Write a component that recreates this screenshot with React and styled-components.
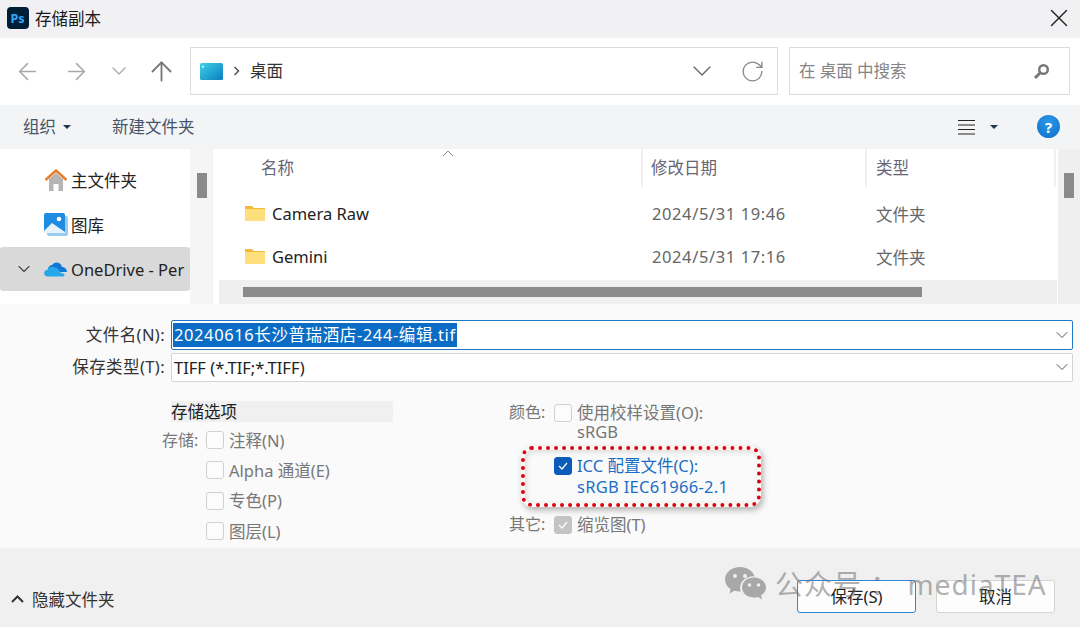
import React from 'react'
import styled, { createGlobalStyle } from 'styled-components'
import { ArrowLeft, ArrowRight, ArrowUp, ChevronDown, RotateCw, X } from 'lucide-react'

const Global = createGlobalStyle`
  html, body { margin: 0; padding: 0; background: #fafafa; }
  body {
    font-family: "Noto Sans", "Noto Sans CJK SC", sans-serif;
    font-size: 16.5px;
    color: #1a1a1a;
  }
`

const Dialog = styled.div`
  position: relative;
  width: 1080px;
  height: 627px;
  overflow: hidden;
  display: flex;
  flex-direction: column;
`
const TitleBar = styled.div`
  height: 38px;
  flex: none;
  box-sizing: border-box;
  background: #f1f1f3;
  display: flex;
  align-items: center;
  padding: 0 6px 3px 7px;
  gap: 6px;
  & > span { flex: 1; }
`
const NavBar = styled.div`
  height: 67px;
  flex: none;
  box-sizing: border-box;
  background: #fff;
  display: flex;
  align-items: center;
  padding: 0 10px 1px 13.5px;
`
const NavIcon = styled.div`
  width: ${p => p.$w}px;
  flex: none;
  display: flex;
  align-items: center;
  color: ${p => p.$color || '#a9a9a9'};
`
const AddressBox = styled.div`
  width: 588px;
  height: 48px;
  box-sizing: border-box;
  flex: none;
  border: 1px solid #dcdcdc;
  display: flex;
  align-items: center;
  padding: 0 12px 0 9px;
  color: #333;
  & > b { font-weight: 400; flex: 1; padding-bottom: 3px; }
`
const SearchBox = styled.div`
  width: 281px;
  height: 48px;
  box-sizing: border-box;
  flex: none;
  margin-left: 11px;
  border: 1px solid #dcdcdc;
  display: flex;
  align-items: center;
  justify-content: space-between;
  padding: 0 19px 0 9px;
  color: #858585;
  & > span { padding-bottom: 3px; }
`
const ToolBar = styled.div`
  height: 44px;
  flex: none;
  box-sizing: border-box;
  background: #f3f4f6;
  display: flex;
  align-items: center;
  padding: 0 20px 1px 23px;
  color: #44546a;
  & > span { padding-bottom: 2px; }
`
const NewFolder = styled.span`
  margin-left: 41px;
  flex: 1;
`
const Caret = styled.i`
  display: inline-block;
  width: 0;
  height: 0;
  border-left: 4px solid transparent;
  border-right: 4px solid transparent;
  border-top: 4px solid #27344e;
  margin-left: ${p => p.$ml || 7}px;
`
const Help = styled.div`
  width: 23px;
  height: 23px;
  border-radius: 50%;
  background: radial-gradient(circle at 50% 30%, #2a97e8, #0f70c8);
  color: #fff;
  font-size: 15px;
  font-weight: 700;
  display: flex;
  align-items: center;
  justify-content: center;
  margin-left: 39px;
`
const Browser = styled.div`
  height: 155px;
  flex: none;
  display: flex;
  background: #fff;
`
const Sidebar = styled.div`
  width: 190px;
  flex: none;
  padding-top: 8px;
  overflow: hidden;
`
const SideRow = styled.div`
  height: ${p => p.$h || 45}px;
  display: flex;
  align-items: center;
  padding-left: ${p => (p.$active ? 14 : 44)}px;
  white-space: nowrap;
  background: ${p => (p.$active ? '#d9d9d9' : 'transparent')};
  border-radius: ${p => (p.$active ? '3px' : 0)};
  color: #222;
  gap: ${p => (p.$active ? 4 : 3)}px;
`
const ScrollTrack = styled.div`
  width: ${p => p.$w}px;
  flex: none;
  margin-left: ${p => p.$ml || 0}px;
  background: ${p => p.$bg};
  display: flex;
  justify-content: center;
  padding-top: 24px;
  box-sizing: border-box;
`
const Thumb = styled.div`
  width: 10px;
  height: 25px;
  background: #8a8a8a;
`
const ListPane = styled.div`
  width: 838px;
  flex: none;
  margin-left: 6px;
  display: flex;
  flex-direction: column;
`
const HeaderRow = styled.div`
  height: 38px;
  margin-bottom: 5px;
  display: grid;
  grid-template-columns: 424px 224px 1fr;
  color: #667;
  position: relative;
`
const HeadCell = styled.div`
  padding-left: ${p => p.$pl}px;
  padding-top: 8px;
  border-right: 2px solid #f0f0f0;
  line-height: 22px;
  margin-right: ${p => p.$mr || 0}px;
`
const SortMark = styled.svg`
  position: absolute;
  left: 223px;
  top: 1px;
`
const FileRow = styled.div`
  height: 43px;
  display: grid;
  grid-template-columns: 424px 224px 1fr;
  align-items: center;
`
const NameCell = styled.div`
  display: flex;
  align-items: center;
  gap: 6px;
  padding-left: 25px;
  color: #222;
`
const DimCell = styled.div`
  padding-left: ${p => p.$pl || 9}px;
  color: #666;
  letter-spacing: ${p => p.$ls || 0}px;
`
const HScroll = styled.div`
  height: 24px;
  margin-top: auto;
  background: #efefef;
  padding: 7px 0 0 24px;
  box-sizing: border-box;
`
const HThumb = styled.div`
  width: 679px;
  height: 10px;
  background: #8a8a8a;
`
const Form = styled.div`
  height: 244px;
  flex: none;
  background: #fafafa;
  padding-top: 15px;
  box-sizing: border-box;
`
const FieldRow = styled.div`
  height: 32px;
  display: flex;
  align-items: center;
`
const FieldLabel = styled.div`
  width: 171px;
  flex: none;
  text-align: right;
  padding-right: 6px;
  padding-bottom: 2px;
  box-sizing: border-box;
  color: #333;
  letter-spacing: .4px;
`
const Combo = styled.div`
  width: 902px;
  height: ${p => (p.$focus ? 30 : 29)}px;
  box-sizing: border-box;
  background: #fff;
  border: 1px solid ${p => (p.$focus ? '#1f78c8' : '#d4d4d4')};
  border-radius: 2px;
  display: flex;
  align-items: center;
  justify-content: space-between;
  padding-left: ${p => (p.$focus ? 1 : 2)}px;
  flex: none;
  color: #222;
`
const Selected = styled.span`
  background: #0a6cc4;
  color: #fff;
  line-height: 24px;
  padding: 0 1px;
  letter-spacing: .6px;
`
const Options = styled.div`
  display: grid;
  grid-template-columns: 347px 1fr;
  padding-left: 162px;
  margin-top: 18px;
`
const OptHead = styled.div`
  margin-left: 9px;
  width: 222px;
  height: 21px;
  background: #f0f0f0;
  line-height: 21px;
  color: #222;
  margin-bottom: 3px;
`
const RightOptions = styled.div`
  padding-top: 1px;
`
const OptRow = styled.div`
  display: flex;
  align-items: ${p => (p.$top ? 'flex-start' : 'center')};
  height: ${p => p.$h || 30.3}px;
  color: ${p => p.$color || '#777'};
  line-height: 21px;
  letter-spacing: ${p => p.$ls || 0}px;
`
const OptLabel = styled.div`
  width: ${p => p.$w}px;
  flex: none;
  color: #777;
  font-size: 16px;
`
const Box = styled.div`
  width: 18px;
  height: 18px;
  flex: none;
  box-sizing: border-box;
  border-radius: 3px;
  border: 1px solid ${p => (p.$on ? '#0b5cb8' : p.$off ? '#c4c4c4' : '#d0d0d0')};
  background: ${p => (p.$on ? '#0b5cb8' : p.$off ? '#c4c4c4' : '#fcfcfc')};
  margin-right: 5px;
  margin-top: ${p => p.$mt || 0}px;
  display: flex;
  align-items: center;
  justify-content: center;
`
const Footer = styled.div`
  flex: 1;
  background: #f0f0f0;
  display: flex;
  align-items: center;
  padding: 18px 25px 0 11px;
  box-sizing: border-box;
  color: #333;
`
const HideToggle = styled.div`
  flex: 1;
  display: flex;
  align-items: center;
  gap: 8px;
  padding-top: 5px;
`
const Btn = styled.div`
  width: 119px;
  height: 33px;
  box-sizing: border-box;
  background: #fdfdfd;
  border: 1px solid ${p => (p.$primary ? '#2f86d6' : '#d4d4d4')};
  border-radius: 3px;
  display: flex;
  align-items: center;
  justify-content: center;
  padding-bottom: 2px;
  margin-left: ${p => p.$ml || 0}px;
  color: #222;
`
const Callout = styled.div`
  position: absolute;
  left: 521px;
  top: 446px;
  width: 240px;
  height: 61px;
  box-sizing: border-box;
  border: 4px dotted #e00010;
  border-radius: 11px;
  box-shadow: 2px 3px 6px rgba(0,0,0,.3), inset 2px 2px 5px rgba(0,0,0,.12);
  pointer-events: none;
`
const Watermark = styled.div`
  position: absolute;
  left: 725px;
  top: 565px;
  display: flex;
  align-items: center;
  gap: 9px;
  color: rgba(110,110,110,.55);
  font-size: 28px;
  letter-spacing: 1px;
  white-space: nowrap;
  line-height: 38px;
  pointer-events: none;
`

const Folder = () => (
  <svg width="22" height="17" viewBox="0 0 22 17">
    <path d="M1 1h7l2 2h11v13H1z" fill="#f5b93a" />
    <rect x="1" y="4" width="20" height="12" fill="#fedf7e" />
  </svg>
)

const Check = () => (
  <svg width="10" height="8" viewBox="0 0 10 8">
    <path d="M1 4l3 3 5-6" fill="none" stroke="#fff" strokeWidth="1.200" />
  </svg>
)

const Wechat = () => (
  <svg width="41" height="34" viewBox="0 0 41 34" fill="#a8a8a8">
    <path d="M15 0C7 0 0 5.400 0 12.500c0 4 2.200 7.300 5.500 9.600L4.500 26.500l5-2.700c1.700.5 3.300.8 5 .8h1.300c-.5-1.300-.7-2.600-.7-3.800 0-6.500 6-11.500 13.400-11.500h1C28 4 22 0 15 0z" />
    <path d="M41 20.500C41 14.600 35.300 10.500 29 10.500s-12 4.100-12 10 5.700 10 12 10c1.300 0 2.700-.2 4-.6l4 2.600-1-4c3-2 5-4.800 5-8z" />
    <g fill="#f0f0f0">
      <circle cx="10" cy="9" r="2" /><circle cx="20" cy="9" r="2" />
      <circle cx="24.500" cy="18" r="1.700" /><circle cx="33.500" cy="18" r="1.700" />
    </g>
  </svg>
)

export default function App() {
  return (
    <Dialog>
      <Global />
      <TitleBar>
        <svg width="22" height="22" viewBox="0 0 22 22">
          <rect width="22" height="22" rx="4" fill="#001e36" />
          <text x="3.500" y="15.500" fontSize="12.500" fontWeight="700" fill="#31a8ff" fontFamily="Noto Sans">Ps</text>
        </svg>
        <span>存储副本</span>
        <X size={30} strokeWidth={1.1} color="#222" />
      </TitleBar>

      <NavBar>
        <NavIcon $w={49}><ArrowLeft size={27} strokeWidth={1.4} /></NavIcon>
        <NavIcon $w={44}><ArrowRight size={27} strokeWidth={1.4} /></NavIcon>
        <NavIcon $w={39}><ChevronDown size={24} strokeWidth={1.3} /></NavIcon>
        <NavIcon $w={44.500} $color="#757575"><ArrowUp size={31} strokeWidth={1.4} /></NavIcon>
        <AddressBox>
          <svg width="23" height="17" viewBox="0 0 23 17" style={{ marginRight: 10 }}>
            <defs>
              <linearGradient id="desk" x1="0" y1="0" x2="1" y2="1">
                <stop offset="0" stopColor="#3fd0ea" />
                <stop offset="1" stopColor="#0b7fc0" />
              </linearGradient>
            </defs>
            <rect width="23" height="17" rx="1.500" fill="url(#desk)" />
            <rect x="2" y="3" width="2" height="1.500" fill="#dff" />
          </svg>
          <svg width="7" height="10" viewBox="0 0 7 10" style={{ marginRight: 10 }}>
            <path d="M1.500 1l4 4-4 4" fill="none" stroke="#555" strokeWidth="1.500" />
          </svg>
          <b>桌面</b>
          <ChevronDown size={32} strokeWidth={1} color="#666" style={{ marginRight: 22 }} />
          <RotateCw size={25} strokeWidth={1.3} color="#888" />
        </AddressBox>
        <SearchBox>
          <span>在 桌面 中搜索</span>
          <svg width="17" height="17" viewBox="0 0 17 17">
            <circle cx="10.500" cy="6.500" r="4.300" fill="none" stroke="#777" strokeWidth="2.400" />
            <path d="M7.500 9.500L2 15" stroke="#777" strokeWidth="3" />
          </svg>
        </SearchBox>
      </NavBar>

      <ToolBar>
        <span>组织</span>
        <Caret />
        <NewFolder>新建文件夹</NewFolder>
        <svg width="17" height="16" viewBox="0 0 17 16">
          <path d="M0 1.500h17M0 6h17M0 10.500h17M0 15h17" stroke="#222" strokeWidth="1" />
        </svg>
        <Caret $ml={15} />
        <Help>?</Help>
      </ToolBar>

      <Browser>
        <Sidebar>
          <SideRow>
            <svg width="24" height="22" viewBox="0 0 24 22">
              <path d="M5 10v12h14V10l-7-6z" fill="#b5b5b5" />
              <rect x="9.500" y="15" width="5" height="7" fill="#fff" />
              <path d="M1.500 11L12 1.500 22.500 11" fill="none" stroke="#e8802c" strokeWidth="2.600" />
            </svg>
            <span>主文件夹</span>
          </SideRow>
          <SideRow>
            <svg width="24" height="23" viewBox="0 0 24 23">
              <rect x="3" y="3" width="21" height="20" rx="2" fill="#9ccbf0" />
              <rect width="21" height="20" rx="2" fill="#1e8ce0" />
              <path d="M0 18l8-8 13 9v1H0z" fill="#e8f3fc" />
              <circle cx="15" cy="6" r="2.300" fill="#fff" />
            </svg>
            <span>图库</span>
          </SideRow>
          <SideRow $active $h={44}>
            <ChevronDown size={20} strokeWidth={1.3} color="#444" style={{ marginRight: 6 }} />
            <svg width="23" height="16" viewBox="0 0 23 16">
              <path d="M8 4C11 0 17 1 18 6c2.500 0 5 2 5 5H6C3 11 3 5 8 4z" fill="#0f78d4" />
              <path d="M3 15.500C-1 15 -1 9 4 8.500c1-3 5-3.500 7-2 2 0 5 3 5 5l3 1c2 .5 2 2.500 0 3z" fill="#28a8ea" />
            </svg>
            <span>OneDrive - Per</span>
          </SideRow>
        </Sidebar>
        <ScrollTrack $w={23} $bg="#f5f5f5"><Thumb /></ScrollTrack>
        <ListPane>
          <HeaderRow>
            <HeadCell $pl={42}>名称</HeadCell>
            <HeadCell $pl={8}>修改日期</HeadCell>
            <HeadCell $pl={9} $mr={1}>类型</HeadCell>
            <SortMark width="12" height="7" viewBox="0 0 12 7">
              <path d="M1 6l5-5 5 5" fill="none" stroke="#888" strokeWidth="1" />
            </SortMark>
          </HeaderRow>
          <FileRow>
            <NameCell><Folder />Camera Raw</NameCell>
            <DimCell $ls={0.6}>2024/5/31 19:46</DimCell>
            <DimCell>文件夹</DimCell>
          </FileRow>
          <FileRow>
            <NameCell><Folder />Gemini</NameCell>
            <DimCell $ls={0.6}>2024/5/31 17:16</DimCell>
            <DimCell>文件夹</DimCell>
          </FileRow>
          <HScroll><HThumb /></HScroll>
        </ListPane>
        <ScrollTrack $w={22} $ml={1} $bg="#efefef"><Thumb /></ScrollTrack>
      </Browser>

      <Form>
        <FieldRow>
          <FieldLabel>文件名(N):</FieldLabel>
          <Combo $focus>
            <Selected>20240616长沙普瑞酒店-244-编辑.tif</Selected>
            <ChevronDown size={20} strokeWidth={1.2} color="#555" />
          </Combo>
        </FieldRow>
        <FieldRow>
          <FieldLabel>保存类型(T):</FieldLabel>
          <Combo>
            <span>TIFF (*.TIF;*.TIFF)</span>
            <ChevronDown size={20} strokeWidth={1.2} color="#555" />
          </Combo>
        </FieldRow>
        <Options>
          <div>
            <OptHead>存储选项</OptHead>
            <OptRow><OptLabel $w={44}>存储:</OptLabel><Box />注释(N)</OptRow>
            <OptRow><OptLabel $w={44} /><Box />Alpha 通道(E)</OptRow>
            <OptRow><OptLabel $w={44} /><Box />专色(P)</OptRow>
            <OptRow><OptLabel $w={44} /><Box />图层(L)</OptRow>
          </div>
          <RightOptions>
            <OptRow $top $h={19}><OptLabel $w={45}>颜色:</OptLabel><Box $mt={2} />使用校样设置(O):</OptRow>
            <OptRow $h={34} $top><OptLabel $w={68} />sRGB</OptRow>
            <OptRow $top $h={21} $color="#1a6fc4"><OptLabel $w={45} /><Box $on $mt={2}><Check /></Box>ICC 配置文件(C):</OptRow>
            <OptRow $h={38} $top $ls={0.3} $color="#1a6fc4"><OptLabel $w={68} />sRGB IEC61966-2.1</OptRow>
            <OptRow $top $h={21}><OptLabel $w={45}>其它:</OptLabel><Box $off $mt={2}><Check /></Box>缩览图(T)</OptRow>
          </RightOptions>
        </Options>
      </Form>

      <Footer>
        <HideToggle>
          <svg width="13" height="8" viewBox="0 0 13 8">
            <path d="M1 7l5.500-5.500L12 7" fill="none" stroke="#333" strokeWidth="2" />
          </svg>
          隐藏文件夹
        </HideToggle>
        <Btn $primary>保存(S)</Btn>
        <Btn $ml={20}>取消</Btn>
      </Footer>

      <Callout />
      <Watermark><Wechat />公众号 ： mediaTEA</Watermark>
    </Dialog>
  )
}
